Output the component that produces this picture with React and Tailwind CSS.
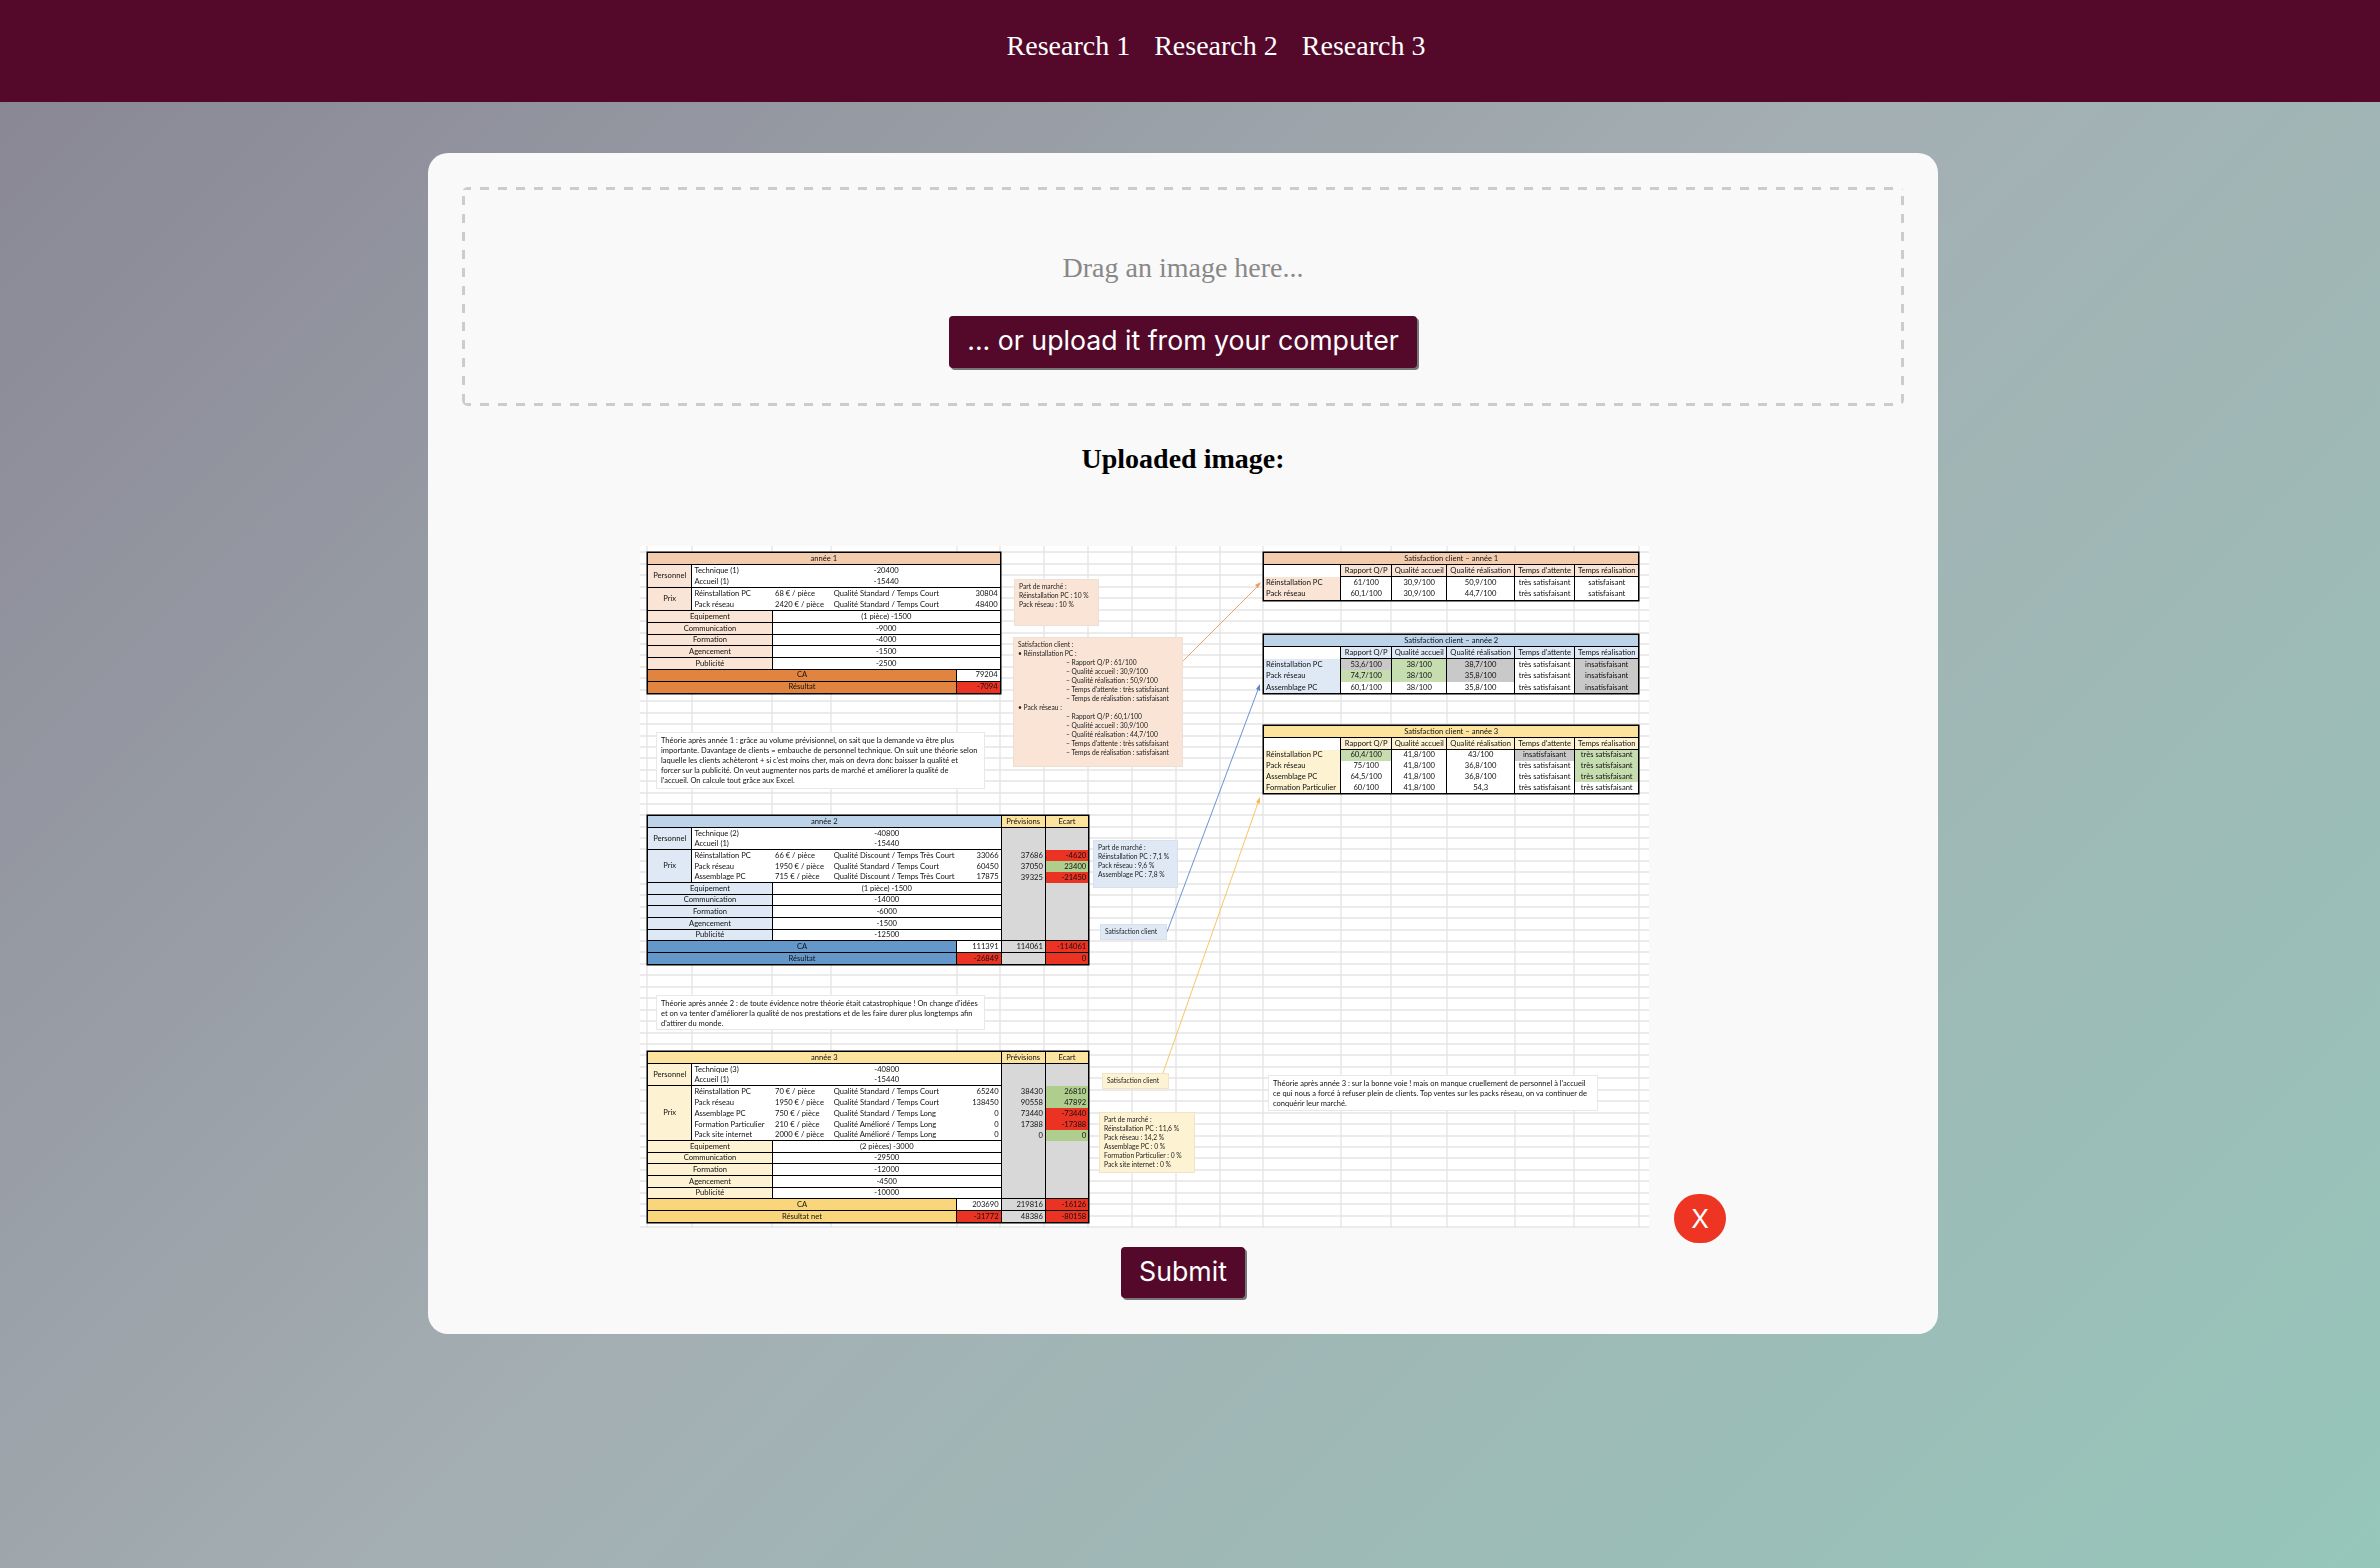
import React from 'react';

const themes = {
  orange: { head: 'bg-[#F3CCAE]', soft: 'bg-[#F9E4D6]', strong: 'bg-[#E1843F]' },
  blue: { head: 'bg-[#BDD3EA]', soft: 'bg-[#DEE9F5]', strong: 'bg-[#6498CB]' },
  yellow: { head: 'bg-[#FCE39E]', soft: 'bg-[#FDF2D2]', strong: 'bg-[#F9D67B]' },
};

const fills = {
  red: 'bg-[#EA3323]',
  green: 'bg-[#AFCE8E]',
  gray: 'bg-[#D8D8D8]',
  white: 'bg-white',
  sgray: 'bg-[#C9C9C9]',
  sgreen: 'bg-[#C6DDB0]',
};

const gridRows = [
  6, 18, 29, 41, 52, 64, 75, 87, 98, 109, 121, 132, 144, 155, 167, 178, 190, 201, 212, 224, 235, 247, 258, 269, 281,
  292, 303, 315, 326, 338, 349, 361, 372, 384, 395, 406, 418, 429, 441, 452, 464, 475, 487, 498, 509, 521, 532, 544,
  555, 567, 578, 590, 601, 612, 624, 635, 647, 658, 670, 681,
];
const gridCols = [7, 52, 132, 191, 317, 360, 404, 448, 492, 536, 580, 623, 701, 751, 807, 875, 934, 999];

// the uploaded picture is a spreadsheet screenshot, grid lines are just a drawing
const SheetLines = () => (
  <svg className="absolute inset-0" width="1009" height="682">
    {gridRows.map((y) => (
      <line key={y} x1="0" x2="1009" y1={y} y2={y} stroke="#e4e4e4" strokeWidth="1.3" />
    ))}
    {gridCols.map((x) => (
      <line key={x} x1={x} x2={x} y1="0" y2="682" stroke="#e4e4e4" strokeWidth="1.3" />
    ))}
  </svg>
);

const Arrows = () => (
  <svg className="absolute inset-0" width="1009" height="682">
    <line x1="543" y1="115" x2="620" y2="38" stroke="#EE9A62" strokeWidth="0.9" />
    <polygon points="621,36 618,42 615,39" fill="#EE9A62" />
    <line x1="527" y1="386" x2="619" y2="141" stroke="#5E86CC" strokeWidth="0.9" />
    <polygon points="620,138 620,145 616,143" fill="#5E86CC" />
    <line x1="523" y1="527" x2="619" y2="254" stroke="#F8BE52" strokeWidth="0.9" />
    <polygon points="620,251 620,258 616,256" fill="#F8BE52" />
  </svg>
);

const Cell = ({ className = '', children }) => (
  <div className={`flex items-center whitespace-nowrap px-[2px] text-[7.6px] leading-none text-[#111] ${className}`}>
    {children}
  </div>
);

const YearTable = ({ pos, rows, cols, theme, title, personnel, prix, items, ca, result, forecast }) => {
  const t = themes[theme];
  return (
    <div className={`absolute grid ring-[1.5px] ring-black ${pos} ${rows} ${cols}`}>
      <Cell className={`col-span-5 justify-center border-b-[1.5px] border-black ${t.head}`}>{title}</Cell>
      {forecast && (
        <>
          <Cell className="justify-center border-b-[1.5px] border-l-[1.5px] border-black bg-[#FCE39E]">Prévisions</Cell>
          <Cell className="justify-center border-b-[1.5px] border-l-[1.5px] border-black bg-[#FCE39E]">Ecart</Cell>
        </>
      )}

      <Cell className={`row-span-2 justify-center border-r-[1.5px] border-b-[1.5px] border-black ${t.soft}`}>Personnel</Cell>
      <Cell className="bg-white">{personnel[0][0]}</Cell>
      <Cell className="col-span-3 justify-center bg-white">{personnel[0][1]}</Cell>
      {forecast && (
        <>
          <Cell className="row-span-2 border-l-[1.5px] border-black bg-[#D8D8D8]" />
          <Cell className="row-span-2 border-l-[1.5px] border-black bg-[#D8D8D8]" />
        </>
      )}
      <Cell className="border-b-[1.5px] border-black bg-white">{personnel[1][0]}</Cell>
      <Cell className="col-span-3 justify-center border-b-[1.5px] border-black bg-white">{personnel[1][1]}</Cell>

      {prix.map((p, i) => {
        const last = i === prix.length - 1;
        const line = last ? 'border-b-[1.5px] border-black' : '';
        return (
          <React.Fragment key={p.name}>
            {i === 0 && (
              <Cell
                className={`justify-center border-r-[1.5px] border-b-[1.5px] border-black ${t.soft} ${
                  prix.length === 2 ? 'row-span-2' : prix.length === 3 ? 'row-span-3' : 'row-span-5'
                }`}
              >
                Prix
              </Cell>
            )}
            <Cell className={`bg-white ${line}`}>{p.name}</Cell>
            <Cell className={`bg-white ${line}`}>{p.price}</Cell>
            <Cell className={`bg-white ${line}`}>{p.quality}</Cell>
            <Cell className={`justify-end bg-white ${line}`}>{p.amount}</Cell>
            {forecast && (
              <>
                <Cell className="justify-end border-l-[1.5px] border-black bg-[#D8D8D8]">{p.prev}</Cell>
                <Cell className={`justify-end border-l-[1.5px] border-black ${fills[p.tone]}`}>{p.gap}</Cell>
              </>
            )}
          </React.Fragment>
        );
      })}

      {items.map(([label, value], i) => (
        <React.Fragment key={label}>
          <Cell className={`col-span-2 justify-center border-r-[1.5px] border-b-[1.5px] border-black ${t.soft}`}>{label}</Cell>
          <Cell className="col-span-3 justify-center border-b-[1.5px] border-black bg-white">{value}</Cell>
          {forecast && i === 0 && (
            <>
              <Cell className="row-span-5 border-b-[1.5px] border-l-[1.5px] border-black bg-[#D8D8D8]" />
              <Cell className="row-span-5 border-b-[1.5px] border-l-[1.5px] border-black bg-[#D8D8D8]" />
            </>
          )}
        </React.Fragment>
      ))}

      <Cell className={`col-span-4 justify-center border-r-[1.5px] border-b-[1.5px] border-black ${t.strong}`}>CA</Cell>
      <Cell className="justify-end border-b-[1.5px] border-black bg-white">{ca}</Cell>
      {forecast && (
        <>
          <Cell className="justify-end border-b-[1.5px] border-l-[1.5px] border-black bg-[#D8D8D8]">{forecast.ca[0]}</Cell>
          <Cell className="justify-end border-b-[1.5px] border-l-[1.5px] border-black bg-[#EA3323]">{forecast.ca[1]}</Cell>
        </>
      )}
      <Cell className={`col-span-4 justify-center border-r-[1.5px] border-black ${t.strong}`}>{result.label}</Cell>
      <Cell className="justify-end bg-[#EA3323]">{result.value}</Cell>
      {forecast && (
        <>
          <Cell className="justify-end border-l-[1.5px] border-black bg-[#D8D8D8]">{forecast.result[0]}</Cell>
          <Cell className="justify-end border-l-[1.5px] border-black bg-[#EA3323]">{forecast.result[1]}</Cell>
        </>
      )}
    </div>
  );
};

const satHeads = ['Rapport Q/P', 'Qualité accueil', 'Qualité réalisation', "Temps d'attente", 'Temps réalisation'];

const SatTable = ({ pos, rows, theme, title, lines }) => {
  const t = themes[theme];
  return (
    <div className={`absolute grid grid-cols-[76px_51.4px_54.6px_68.3px_59.7px_64.5px] ring-[1.5px] ring-black ${pos} ${rows}`}>
      <Cell className={`col-span-6 justify-center border-b-[1.5px] border-black ${t.head}`}>{title}</Cell>
      <Cell className="bg-white" />
      {satHeads.map((h) => (
        <Cell key={h} className={`justify-center border-b-[1.5px] border-l-[1.5px] border-black ${t.soft}`}>
          {h}
        </Cell>
      ))}
      {lines.map((line) => (
        <React.Fragment key={line.name}>
          <Cell className={t.soft}>{line.name}</Cell>
          {line.values.map(([value, tone], i) => (
            <Cell key={i} className={`justify-center border-l-[1.5px] border-black ${fills[tone || 'white']}`}>
              {value}
            </Cell>
          ))}
        </React.Fragment>
      ))}
    </div>
  );
};

const Note = ({ pos, tone, children }) => (
  <div
    className={`absolute border px-[4px] pt-[2px] text-[6.7px] leading-[9px] whitespace-nowrap text-[#222] ${pos} ${tone}`}
  >
    {children}
  </div>
);

const Theory = ({ pos, children }) => (
  <div className={`absolute border border-[#e8e8e8] bg-white px-[4px] pt-[3px] text-[7.5px] leading-[10px] whitespace-nowrap text-[#111] ${pos}`}>
    {children}
  </div>
);

const peach = 'border-[#ece0d6] bg-[#F9E4D6]';
const sky = 'border-[#d8e0ea] bg-[#DEE9F5]';
const cream = 'border-[#efe4c8] bg-[#FDF2D2]';

const Sheet = () => (
  <div className="relative h-[682px] w-[1009px] shrink-0 bg-white font-['Lato',sans-serif] blur-[0.5px]">
    <SheetLines />
    <Arrows />

    <YearTable
      pos="top-[7px] left-[8px]"
      rows="grid-rows-[12px_11.6px_11.6px_11.6px_11.6px_11.7px_11.7px_11.7px_11.7px_11.7px_11.7px_11.5px]"
      cols="grid-cols-[44.4px_80.6px_58.7px_125.3px_42.6px]"
      theme="orange"
      title="année 1"
      personnel={[['Technique (1)', '-20400'], ['Accueil (1)', '-15440']]}
      prix={[
        { name: 'Réinstallation PC', price: '68 € / pièce', quality: 'Qualité Standard / Temps Court', amount: '30804' },
        { name: 'Pack réseau', price: '2420 € / pièce', quality: 'Qualité Standard / Temps Court', amount: '48400' },
      ]}
      items={[['Equipement', '(1 pièce)  -1500'], ['Communication', '-9000'], ['Formation', '-4000'], ['Agencement', '-1500'], ['Publicité', '-2500']]}
      ca="79204"
      result={{ label: 'Résultat', value: '-7094' }}
    />

    <YearTable
      pos="top-[270px] left-[8px]"
      rows="grid-rows-[12px_11px_11px_11px_11px_11px_11.7px_11.7px_11.7px_11.7px_11.7px_11.7px_11.2px]"
      cols="grid-cols-[44.4px_80.6px_58.7px_125.3px_43.6px_44.3px_43.4px]"
      theme="blue"
      title="année 2"
      personnel={[['Technique (2)', '-40800'], ['Accueil (1)', '-15440']]}
      prix={[
        { name: 'Réinstallation PC', price: '66 € / pièce', quality: 'Qualité Discount / Temps Très Court', amount: '33066', prev: '37686', gap: '-4620', tone: 'red' },
        { name: 'Pack réseau', price: '1950 € / pièce', quality: 'Qualité Standard / Temps Court', amount: '60450', prev: '37050', gap: '23400', tone: 'green' },
        { name: 'Assemblage PC', price: '715 € / pièce', quality: 'Qualité Discount / Temps Très Court', amount: '17875', prev: '39325', gap: '-21450', tone: 'red' },
      ]}
      items={[['Equipement', '(1 pièce) -1500'], ['Communication', '-14000'], ['Formation', '-6000'], ['Agencement', '-1500'], ['Publicité', '-12500']]}
      ca="111391"
      result={{ label: 'Résultat', value: '-26849' }}
      forecast={{ ca: ['114061', '-114061'], result: ['', '0'] }}
    />

    <YearTable
      pos="top-[506px] left-[8px]"
      rows="grid-rows-[12px_11px_11px_11px_11px_11px_11px_11px_11.7px_11.7px_11.7px_11.7px_11.7px_11.7px_11.2px]"
      cols="grid-cols-[44.4px_80.6px_58.7px_125.3px_43.6px_44.3px_43.4px]"
      theme="yellow"
      title="année 3"
      personnel={[['Technique (3)', '-40800'], ['Accueil (1)', '-15440']]}
      prix={[
        { name: 'Réinstallation PC', price: '70 € / pièce', quality: 'Qualité Standard / Temps Court', amount: '65240', prev: '38430', gap: '26810', tone: 'green' },
        { name: 'Pack réseau', price: '1950 € / pièce', quality: 'Qualité Standard / Temps Court', amount: '138450', prev: '90558', gap: '47892', tone: 'green' },
        { name: 'Assemblage PC', price: '750 € / pièce', quality: 'Qualité Standard / Temps Long', amount: '0', prev: '73440', gap: '-73440', tone: 'red' },
        { name: 'Formation Particulier', price: '210 € / pièce', quality: 'Qualité Amélioré / Temps Long', amount: '0', prev: '17388', gap: '-17388', tone: 'red' },
        { name: 'Pack site internet', price: '2000 € / pièce', quality: 'Qualité Amélioré / Temps Long', amount: '0', prev: '0', gap: '0', tone: 'green' },
      ]}
      items={[['Equipement', '(2 pièces) -3000'], ['Communication', '-29500'], ['Formation', '-12000'], ['Agencement', '-4500'], ['Publicité', '-10000']]}
      ca="203690"
      result={{ label: 'Résultat net', value: '-31772' }}
      forecast={{ ca: ['219816', '-16126'], result: ['48386', '-80158'] }}
    />

    <SatTable
      pos="top-[7px] left-[624px]"
      rows="grid-rows-[12px_11.7px_11.7px_11.2px]"
      theme="orange"
      title="Satisfaction client – année 1"
      lines={[
        { name: 'Réinstallation PC', values: [['61/100'], ['30,9/100'], ['50,9/100'], ['très satisfaisant'], ['satisfaisant']] },
        { name: 'Pack réseau', values: [['60,1/100'], ['30,9/100'], ['44,7/100'], ['très satisfaisant'], ['satisfaisant']] },
      ]}
    />
    <SatTable
      pos="top-[89px] left-[624px]"
      rows="grid-rows-[12px_11.7px_11.7px_11.6px_11.2px]"
      theme="blue"
      title="Satisfaction client – année 2"
      lines={[
        { name: 'Réinstallation PC', values: [['53,6/100', 'sgray'], ['38/100', 'sgreen'], ['38,7/100', 'sgray'], ['très satisfaisant'], ['insatisfaisant', 'sgray']] },
        { name: 'Pack réseau', values: [['74,7/100', 'sgreen'], ['38/100', 'sgreen'], ['35,8/100', 'sgray'], ['très satisfaisant'], ['insatisfaisant', 'sgray']] },
        { name: 'Assemblage PC', values: [['60,1/100'], ['38/100'], ['35,8/100'], ['très satisfaisant'], ['insatisfaisant', 'sgray']] },
      ]}
    />
    <SatTable
      pos="top-[180px] left-[624px]"
      rows="grid-rows-[12px_11.7px_11px_11px_10.8px_10.4px]"
      theme="yellow"
      title="Satisfaction client – année 3"
      lines={[
        { name: 'Réinstallation PC', values: [['60,4/100', 'sgreen'], ['41,8/100'], ['43/100'], ['insatisfaisant', 'sgray'], ['très satisfaisant', 'sgreen']] },
        { name: 'Pack réseau', values: [['75/100'], ['41,8/100'], ['36,8/100'], ['très satisfaisant'], ['très satisfaisant', 'sgreen']] },
        { name: 'Assemblage PC', values: [['64,5/100'], ['41,8/100'], ['36,8/100'], ['très satisfaisant'], ['très satisfaisant', 'sgreen']] },
        { name: 'Formation Particulier', values: [['60/100'], ['41,8/100'], ['54,3'], ['très satisfaisant'], ['très satisfaisant']] },
      ]}
    />

    <Note pos="top-[33px] left-[374px] h-[47px] w-[85px]" tone={peach}>
      <p>Part de marché :</p>
      <p>Réinstallation PC : 10 %</p>
      <p>Pack réseau : 10 %</p>
    </Note>

    <Note pos="top-[91px] left-[373px] h-[130px] w-[170px]" tone={peach}>
      <p>Satisfaction client :</p>
      <p>• Réinstallation PC :</p>
      <div className="pl-[48px]">
        <p>– Rapport Q/P : 61/100</p>
        <p>– Qualité accueil : 30,9/100</p>
        <p>– Qualité réalisation : 50,9/100</p>
        <p>– Temps d'attente : très satisfaisant</p>
        <p>– Temps de réalisation : satisfaisant</p>
      </div>
      <p>• Pack réseau :</p>
      <div className="pl-[48px]">
        <p>– Rapport Q/P : 60,1/100</p>
        <p>– Qualité accueil : 30,9/100</p>
        <p>– Qualité réalisation : 44,7/100</p>
        <p>– Temps d'attente : très satisfaisant</p>
        <p>– Temps de réalisation : satisfaisant</p>
      </div>
    </Note>

    <Note pos="top-[294px] left-[453px] h-[48px] w-[85px]" tone={sky}>
      <p>Part de marché :</p>
      <p>Réinstallation PC : 7,1 %</p>
      <p>Pack réseau : 9,6 %</p>
      <p>Assemblage PC : 7,8 %</p>
    </Note>

    <Note pos="top-[378px] left-[460px] h-[16px] w-[67px]" tone={sky}>
      <p>Satisfaction client</p>
    </Note>

    <Note pos="top-[527px] left-[462px] h-[16px] w-[67px]" tone={cream}>
      <p>Satisfaction client</p>
    </Note>

    <Note pos="top-[566px] left-[459px] h-[61px] w-[96px]" tone={cream}>
      <p>Part de marché :</p>
      <p>Réinstallation PC : 11,6 %</p>
      <p>Pack réseau : 14,2 %</p>
      <p>Assemblage PC : 0 %</p>
      <p>Formation Particulier : 0 %</p>
      <p>Pack site internet : 0 %</p>
    </Note>

    <Theory pos="top-[186px] left-[16px] h-[57px] w-[329px]">
      Théorie après année 1 : grâce au volume prévisionnel, on sait que la demande va être plus<br />
      importante. Davantage de clients = embauche de personnel technique. On suit une théorie selon<br />
      laquelle les clients achèteront + si c'est moins cher, mais on devra donc baisser la qualité et<br />
      forcer sur la publicité. On veut augmenter nos parts de marché et améliorer la qualité de<br />
      l'accueil. On calcule tout grâce aux Excel.
    </Theory>
    <Theory pos="top-[449px] left-[16px] h-[35px] w-[329px]">
      Théorie après année 2 : de toute évidence notre théorie était catastrophique ! On change d'idées<br />
      et on va tenter d'améliorer la qualité de nos prestations et de les faire durer plus longtemps afin<br />
      d'attirer du monde.
    </Theory>
    <Theory pos="top-[529px] left-[628px] h-[36px] w-[330px]">
      Théorie après année 3 : sur la bonne voie ! mais on manque cruellement de personnel à l'accueil<br />
      ce qui nous a forcé à refuser plein de clients. Top ventes sur les packs réseau, on va continuer de<br />
      conquérir leur marché.
    </Theory>
  </div>
);

export default function App() {
  return (
    <div className="min-h-screen bg-[linear-gradient(135deg,#888593_0%,#A4AFB3_50%,#96C6BA_100%)] pb-[234px]">
      <header className="flex h-[102px] justify-center gap-[24px] bg-[#54092A] pt-[28px] pl-[52px] font-['Liberation_Serif',serif] text-[28px] leading-[36px] text-white">
        <a>Research 1</a>
        <a>Research 2</a>
        <a>Research 3</a>
      </header>

      <main className="mt-[51px] ml-[428px] flex w-[1510px] flex-col items-center rounded-[20px] bg-[#F9F9F9] px-[34px] pt-[34px] pb-[36px]">
        <div className="flex h-[219px] w-full flex-col items-center rounded-[6px] [background-image:linear-gradient(90deg,#ccc_50%,transparent_50%),linear-gradient(90deg,#ccc_50%,transparent_50%),linear-gradient(0deg,#ccc_50%,transparent_50%),linear-gradient(0deg,#ccc_50%,transparent_50%)] [background-size:18px_3px,18px_3px,3px_18px,3px_18px] [background-position:0_0,0_100%,0_0,100%_0] [background-repeat:repeat-x,repeat-x,repeat-y,repeat-y] pt-[63px]">
          <p className="font-['Liberation_Serif',serif] text-[28px] leading-[36px] text-[#888]">Drag an image here...</p>
          <button className="mt-[30px] h-[52px] w-[468px] rounded-[4px] bg-[#54092A] pb-[3px] font-['Inter',sans-serif] text-[26.7px] leading-none text-white shadow-[2px_2px_0_#777]">
            ... or upload it from your computer
          </button>
        </div>

        <h2 className="mt-[35px] font-['Liberation_Serif',serif] text-[28px] leading-[36px] font-bold text-black">Uploaded image:</h2>

        <div className="mt-[69px] flex items-start">
          <Sheet />
          <button className="mt-[648px] ml-[25px] flex h-[49px] w-[52px] shrink-0 items-center justify-center rounded-full bg-[#EE3523] font-['Inter',sans-serif] text-[26px] leading-none text-white">
            X
          </button>
        </div>

        <button className="mt-[4px] h-[51px] w-[124px] rounded-[4px] bg-[#54092A] pb-[2px] font-['Inter',sans-serif] text-[26.7px] leading-none text-white shadow-[2px_2px_0_#777]">
          Submit
        </button>
      </main>
    </div>
  );
}
